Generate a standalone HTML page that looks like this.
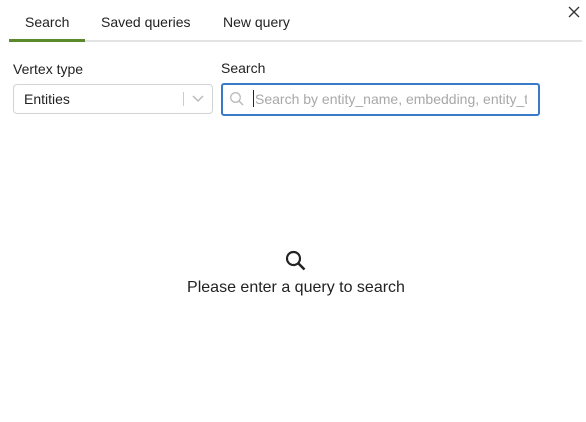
<!DOCTYPE html>
<html><head><style>
body{margin:0;width:586px;height:422px;background:#fff;font-family:"Liberation Sans",sans-serif;color:#222;position:relative;overflow:hidden}
.a{position:absolute}
.tab{position:absolute;top:14px;font-size:14px;color:#222}
</style></head><body>
<div class="tab" style="left:25px">Search</div>
<div class="tab" style="left:101px">Saved queries</div>
<div class="tab" style="left:223px">New query</div>
<svg class="a" style="left:568px;top:6px" width="12" height="12"><path d="M1 1l10 10M11 1L1 11" stroke="#333" stroke-width="1.3"/></svg>
<div class="a" style="left:9px;top:40px;width:573px;height:2px;background:#e3e3e3"></div>
<div class="a" style="left:9px;top:39px;width:76px;height:3px;background:#5a8a2a"></div>
<div class="a" style="left:13px;top:61px;font-size:14px">Vertex type</div>
<div class="a" style="left:221px;top:60px;font-size:14px">Search</div>
<div class="a" style="left:13px;top:84px;width:198px;height:28px;border:1px solid #d3d3d3;border-radius:4px"></div>
<div class="a" style="left:24px;top:91px;font-size:14px">Entities</div>
<div class="a" style="left:183px;top:92px;width:1px;height:14px;background:#ccc"></div>
<svg class="a" style="left:191px;top:94px" width="14" height="10"><path d="M2 2l5 5 5-5" stroke="#bbb" stroke-width="1.5" fill="none"/></svg>
<div class="a" style="left:221px;top:83px;width:315px;height:29px;border:2px solid #3a7bc8;border-radius:3px"></div>
<svg class="a" style="left:229px;top:91px" width="16" height="16"><circle cx="6.5" cy="6.5" r="4.8" stroke="#bbb" stroke-width="1.3" fill="none"/><path d="M10 10l4 4" stroke="#bbb" stroke-width="1.5"/></svg>
<div class="a" style="left:253px;top:90px;width:1px;height:17px;background:#222"></div>
<div class="a" style="left:255px;top:91px;font-size:14px;color:#a8a8a8;white-space:nowrap;width:272px;overflow:hidden">Search by entity_name, embedding, entity_type</div>
<svg class="a" style="left:284px;top:249px" width="24" height="24"><circle cx="9.5" cy="9.5" r="6.5" stroke="#222" stroke-width="2.2" fill="none"/><path d="M14.5 14.5l6 6" stroke="#222" stroke-width="2.6"/></svg>
<div class="a" style="left:0;width:592px;text-align:center;top:279px;font-size:16px;color:#222">Please enter a query to search</div>
</body></html>
